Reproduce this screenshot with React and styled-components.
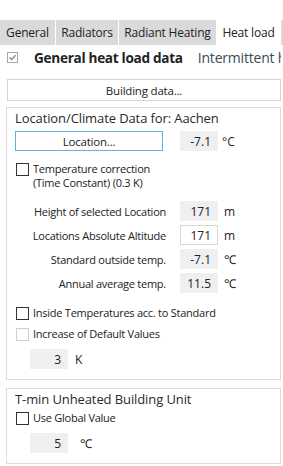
import React from 'react';
import styled, { createGlobalStyle } from 'styled-components';

const Global = createGlobalStyle`
  html, body { margin: 0; padding: 0; background: #fff; }
  body {
    width: 283px;
    height: 466px;
    overflow: hidden;
    font-family: "Open Sans", "Noto Sans", sans-serif;
    color: #222;
  }
`;

const Page = styled.div`
  padding-top: 20px;
  display: flex;
  flex-direction: column;
`;

const Tabs = styled.div`
  display: flex;
  gap: 1px;
  height: 25px;
`;

const Tab = styled.div`
  width: ${p => p.w}px;
  flex: none;
  display: flex;
  align-items: center;
  justify-content: center;
  font-size: 12px;
  letter-spacing: -0.2px;
  color: #222;
  background: ${p => (p.active ? '#fff' : '#dadada')};
`;

const Filler = styled.div`
  flex: 1;
  background: #dadada;
`;

const Content = styled.div`
  padding: 0 2px 0 6px;
  display: flex;
  flex-direction: column;
`;

const Header = styled.div`
  display: flex;
  align-items: center;
  height: 18px;
  margin-top: 3px;
  white-space: nowrap;
  overflow: hidden;
`;

const HeaderCheck = styled.div`
  width: 9px;
  height: 9px;
  margin-left: 1px;
  border: 1px solid #a8a8a8;
  display: flex;
  align-items: center;
  justify-content: center;
  flex: none;
`;

const HeaderTitle = styled.span`
  margin-left: 16px;
  font-size: 13.6px;
  font-weight: 700;
  color: #222;
  letter-spacing: -0.3px;
`;

const Sep = styled.span`
  display: inline-block;
  width: 1px;
  height: 17px;
  background: #333;
  margin: 0 8px 0 7px;
`;

const HeaderOther = styled.span`
  font-size: 14px;
  letter-spacing: -0.2px;
  color: #3a4a55;
`;

const WideButton = styled.div`
  margin-top: 13px;
  margin-left: 1px;
  height: 20px;
  border: 1px solid #d4d4d4;
  display: flex;
  align-items: center;
  justify-content: center;
  font-size: 11.5px;
  letter-spacing: -0.2px;
`;

const Group = styled.div`
  margin-top: ${p => p.mt}px;
  border: 1px solid #dcdcdc;
  padding: 2px 0 ${p => p.pb}px 0;
  display: flex;
  flex-direction: column;
`;

const GroupTitle = styled.div`
  font-size: 13px;
  line-height: 16px;
  color: #2a2a2a;
  letter-spacing: -0.1px;
  margin-left: 8px;
`;

const Row = styled.div`
  display: flex;
  align-items: center;
  margin-top: ${p => p.mt || 0}px;
`;

const LocButton = styled.div`
  margin-left: 8px;
  width: 146px;
  height: 18px;
  border: 1px solid #5cb3e6;
  display: flex;
  align-items: center;
  justify-content: center;
  font-size: 11.5px;
  letter-spacing: -0.2px;
`;

const Value = styled.div`
  width: 30px;
  height: 18px;
  padding-right: 6px;
  flex: none;
  box-sizing: content-box;
  display: flex;
  align-items: center;
  justify-content: flex-end;
  font-size: 12px;
  color: #222;
  background: ${p => (p.editable ? '#fff' : '#efefef')};
  border: 1px solid ${p => (p.editable ? '#d6d6d6' : '#efefef')};
  margin-left: ${p => p.ml || 0}px;
`;

const Unit = styled.span`
  font-size: 12px;
  margin-left: ${p => p.ml || 4}px;
  color: #222;
`;

const Check = styled.div`
  width: 11px;
  height: 11px;
  flex: none;
  border: 1px solid ${p => (p.disabled ? '#cfcfcf' : '#333')};
  background: #fff;
`;

const CheckRow = styled.div`
  display: flex;
  align-items: flex-start;
  margin-left: 9px;
  margin-top: ${p => p.mt || 0}px;
`;

const CheckLabel = styled.div`
  margin-left: 4px;
  font-size: 11px;
  line-height: 14px;
  letter-spacing: -0.25px;
  margin-top: -1px;
  color: #222;
  white-space: nowrap;
`;

const Grid = styled.div`
  display: grid;
  grid-template-columns: 173px 38px auto;
  row-gap: 4px;
  align-items: center;
  margin-top: ${p => p.mt}px;
`;

const GridLabel = styled.div`
  text-align: right;
  font-size: 11px;
  letter-spacing: -0.25px;
  padding-right: 14px;
  white-space: nowrap;
`;

const Indented = styled(Row)`
  margin-left: 23px;
`;

const rows = [
  ['Height of selected Location', '171', 'm', false],
  ['Locations Absolute Altitude', '171', 'm', true],
  ['Standard outside temp.', '-7.1', '℃', false],
  ['Annual average temp.', '11.5', '℃', false],
];

export default function App() {
  return (
    <Page>
      <Global />
      <Tabs>
        <Tab w={55}>General</Tab>
        <Tab w={62}>Radiators</Tab>
        <Tab w={97}>Radiant Heating</Tab>
        <Tab w={63} active>Heat load</Tab>
        <Filler />
      </Tabs>
      <Content>
        <Header>
          <HeaderCheck>
            <svg width="9" height="9" viewBox="0 0 9 9">
              <path d="M1.5 4.5 L3.6 6.6 L7.6 2.2" fill="none" stroke="#8a8a8a" strokeWidth="1.4" />
            </svg>
          </HeaderCheck>
          <HeaderTitle>General heat load data</HeaderTitle>
          <Sep />
          <HeaderOther>Intermittent heating</HeaderOther>
        </Header>
        <WideButton>Building data...</WideButton>

        <Group mt={6} pb={10}>
          <GroupTitle>Location/Climate Data for: Aachen</GroupTitle>
          <Row mt={5}>
            <LocButton>Location...</LocButton>
            <Value ml={17}>-7.1</Value>
            <Unit>°C</Unit>
          </Row>
          <CheckRow mt={12}>
            <Check />
            <CheckLabel>
              Temperature correction
              <br />
              (Time Constant) (0.3 K)
            </CheckLabel>
          </CheckRow>
          <Grid mt={11}>
            {rows.map(([label, val, unit, editable]) => (
              <React.Fragment key={label}>
                <GridLabel>{label}</GridLabel>
                <Value editable={editable}>{val}</Value>
                <Unit ml={6}>{unit}</Unit>
              </React.Fragment>
            ))}
          </Grid>
          <CheckRow mt={14}>
            <Check />
            <CheckLabel>Inside Temperatures acc. to Standard</CheckLabel>
          </CheckRow>
          <CheckRow mt={8}>
            <Check disabled />
            <CheckLabel>Increase of Default Values</CheckLabel>
          </CheckRow>
          <Indented mt={8}>
            <Value>3</Value>
            <Unit ml={7}>K</Unit>
          </Indented>
        </Group>

        <Group mt={8} pb={10}>
          <GroupTitle>T-min Unheated Building Unit</GroupTitle>
          <CheckRow mt={5}>
            <Check />
            <CheckLabel>Use Global Value</CheckLabel>
          </CheckRow>
          <Indented mt={8}>
            <Value>5</Value>
            <Unit ml={12}>℃</Unit>
          </Indented>
        </Group>
      </Content>
    </Page>
  );
}
